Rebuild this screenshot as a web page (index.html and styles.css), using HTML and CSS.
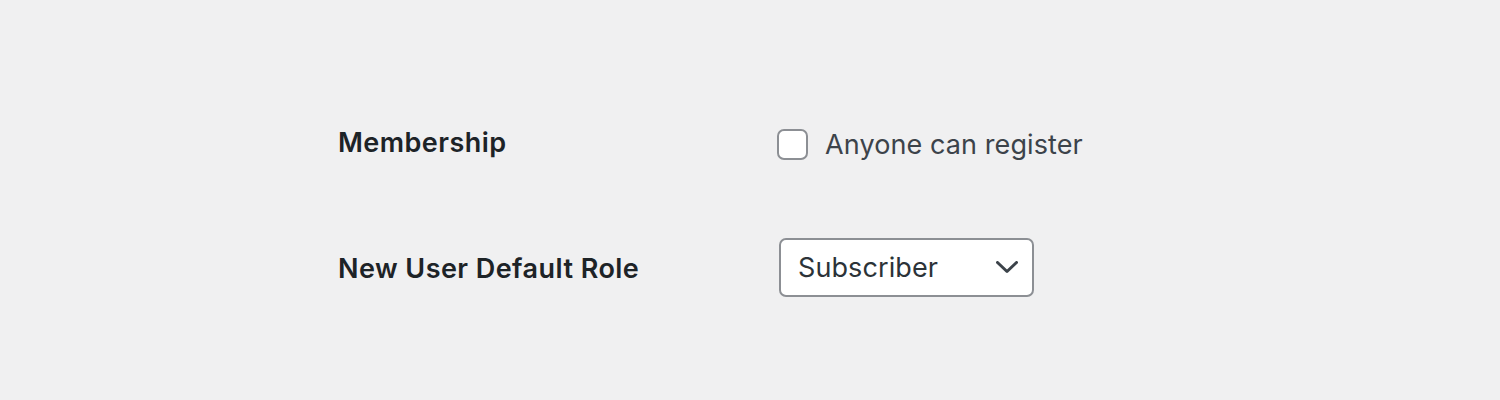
FILE: index.html
```html
<!DOCTYPE html>
<html lang="en">
<head>
<meta charset="utf-8">
<title>Membership settings</title>
<link rel="stylesheet" href="styles.css">
</head>
<body>
<main class="form-table">
  <div class="row row-membership">
    <div class="label">Membership</div>
    <div class="field">
      <label class="check">
        <input type="checkbox" class="checkbox">
        <span>Anyone can register</span>
      </label>
    </div>
  </div>
  <div class="row row-role">
    <div class="label">New User Default Role</div>
    <div class="field">
      <div class="select-wrap">
        <select class="select">
          <option>Subscriber</option>
        </select>
        <svg class="chevron" width="22" height="13" viewBox="0 0 22 13" aria-hidden="true">
          <polyline points="1.5,1.5 11,10.5 20.5,1.5" fill="none" stroke="#3c434a" stroke-width="3" stroke-linecap="round" stroke-linejoin="round"/>
        </svg>
      </div>
    </div>
  </div>
</main>
</body>
</html>
```
FILE: styles.css
```css
html, body {
  margin: 0;
  padding: 0;
  background: #f0f0f1;
}
body {
  font-family: Inter, "Noto Sans", "Liberation Sans", sans-serif;
  color: #1d2327;
}
.form-table {
  display: flex;
  flex-direction: column;
  gap: 63px;
  padding: 114px 0 0 338px;
}
.row {
  display: grid;
  grid-template-columns: 439px auto;
  align-items: center;
  height: 60px;
}
.label {
  font-size: 27px;
  font-weight: 600;
  letter-spacing: 0.45px;
  color: #1d2327;
}
.row-membership .label {
  margin-top: -3px;
}
.row-role .label {
  margin-top: 3px;
}
.check {
  display: flex;
  align-items: center;
  gap: 17px;
  font-size: 27px;
  letter-spacing: 0.1px;
  color: #3c434a;
}
.checkbox {
  appearance: none;
  -webkit-appearance: none;
  margin: 0;
  width: 31px;
  height: 31px;
  border: 2px solid #8c8f94;
  border-radius: 7px;
  background: #fff;
  box-sizing: border-box;
}
.select-wrap {
  position: relative;
  width: 255px;
  margin-left: 2px;
}
.select {
  appearance: none;
  -webkit-appearance: none;
  display: block;
  width: 255px;
  height: 59px;
  box-sizing: border-box;
  margin: 0;
  padding: 0 0 0 17px;
  border: 2px solid #8c8f94;
  border-radius: 7px;
  background: #fff;
  font-family: Inter, "Noto Sans", "Liberation Sans", sans-serif;
  font-size: 27px;
  letter-spacing: 0.1px;
  color: #2c3338;
}
.chevron {
  position: absolute;
  right: 16px;
  top: 23px;
  pointer-events: none;
}
```
